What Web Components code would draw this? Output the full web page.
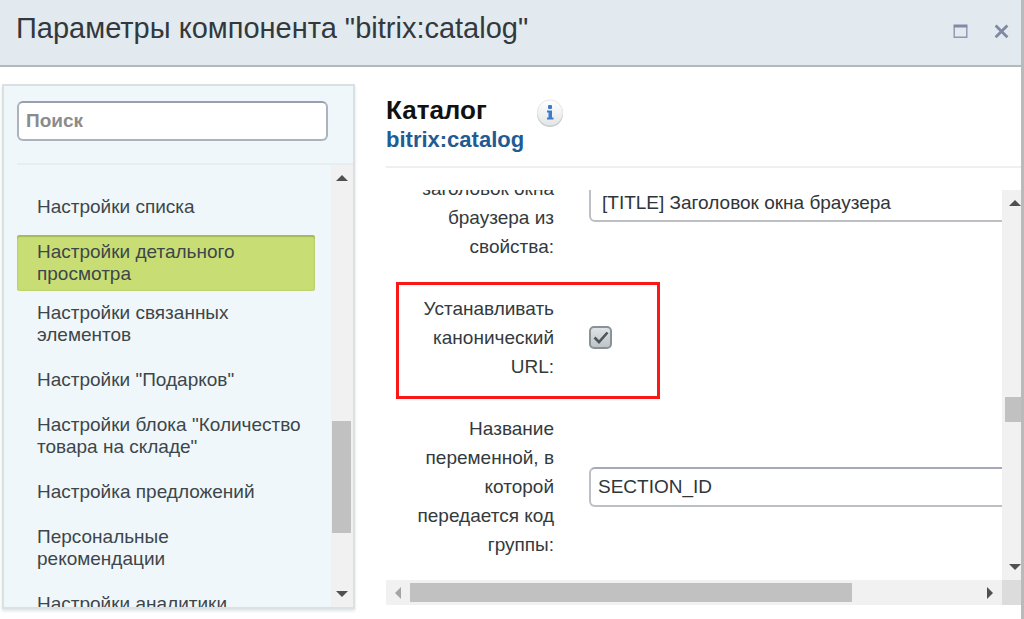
<!DOCTYPE html>
<html lang="ru">
<head>
<meta charset="utf-8">
<title>Параметры компонента</title>
<style>
html, body { margin: 0; height: 100%; }
body { font-family: "Liberation Sans", Arial, sans-serif; font-size: 19px; color: #333a3e; background: #fff; overflow: hidden; }
</style>
</head>
<body>
<component-dialog>
  <dialog-header slot="header">Параметры компонента "bitrix:catalog"</dialog-header>
  <settings-nav slot="nav">
    <nav-item>Настройки списка</nav-item>
    <nav-item active>Настройки детального просмотра</nav-item>
    <nav-item>Настройки связанных элементов</nav-item>
    <nav-item>Настройки "Подарков"</nav-item>
    <nav-item>Настройки блока "Количество товара на складе"</nav-item>
    <nav-item>Настройка предложений</nav-item>
    <nav-item>Персональные<br>рекомендации</nav-item>
    <nav-item>Настройки аналитики</nav-item>
  </settings-nav>
  <settings-panel heading="Каталог" component="bitrix:catalog">
    <setting-row type="select" label="заголовок окна браузера из свойства:" value="[TITLE] Заголовок окна браузера"></setting-row>
    <setting-row type="checkbox" label="Устанавливать канонический URL:" highlighted></setting-row>
    <setting-row type="text" label="Название переменной, в которой передается код группы:" value="SECTION_ID"></setting-row>
  </settings-panel>
</component-dialog>

<script>
class BaseElement extends HTMLElement {
  connectedCallback() {
    if (this.shadowRoot) return;
    this.attachShadow({ mode: "open" }).innerHTML = this.render();
  }
  attr(name) { return (this.getAttribute(name) || "").replace(/"/g, "&quot;"); }
}

customElements.define("component-dialog", class extends BaseElement {
  render() {
    return `<style>
      :host { display: flex; flex-direction: column; height: 100vh; box-sizing: border-box; border-right: 3px solid #b9babc; background: #fff; }
      main { flex: 1; min-height: 0; display: flex; gap: 31px; padding: 17px 0 10px 2px; }
    </style>
    <slot name="header"></slot>
    <main><slot name="nav"></slot><slot></slot></main>`;
  }
});

customElements.define("dialog-header", class extends BaseElement {
  render() {
    return `<style>
      :host { display: flex; align-items: center; justify-content: space-between; flex: none; height: 65px; padding: 0 11px 0 16px;
        background: #e2eaef; border-bottom: 2px solid #b2babb; }
      h1 { margin: 0 0 9px; font-size: 29px; font-weight: 400; line-height: 36px; color: #33383c; white-space: nowrap; }
      div { display: flex; gap: 24px; padding-bottom: 3px; }
      button { display: flex; padding: 0; border: 0; background: none; }
    </style>
    <h1><slot></slot></h1>
    <div>
      <button type="button" aria-label="Развернуть"><svg width="17" height="16" viewBox="0 0 17 16"><path d="M1.5 3H15.5" stroke="#8189a4" stroke-width="3"/><path d="M2.2 4V14.2H14.8V4" fill="none" stroke="#8e96b0" stroke-width="1.4"/></svg></button>
      <button type="button" aria-label="Закрыть"><svg width="17" height="16" viewBox="0 0 17 16"><path d="M2.6 2.4L14.4 14.2M14.4 2.4L2.6 14.2" stroke="#8088a2" stroke-width="2.8"/></svg></button>
    </div>`;
  }
});

customElements.define("scroll-bar", class extends BaseElement {
  render() {
    const h = this.hasAttribute("horizontal");
    const [before, thumb, after] = this.attr("parts").split(" ");
    const icon = (d, muted) => `<svg width="12" height="12" viewBox="0 0 12 12"><path d="${d}" fill="${muted ? "#a5a5a5" : "#505050"}"/></svg>`;
    return `<style>
      :host { display: flex; flex: none; flex-direction: ${h ? "row" : "column"}; ${h ? "height: 25px" : "width: 22px"}; background: #f1f1f1; }
      button { flex: none; display: flex; align-items: center; justify-content: center; padding: 0; border: 0; background: none;
        ${h ? "width: 24px" : "height: 26px; width: 100%"}; }
      svg { flex: none; }
      .thumb { flex: ${thumb} 1 0; background: #c1c1c1; ${h ? "margin: 3px 0" : "margin: 0 2px 0 1px"}; }
    </style>
    <button type="button" aria-label="Назад">${h ? icon("M9 0V12L3 6Z", true) : icon("M0 9H12L6 3Z")}</button>
    <span style="flex:${before} 1 0"></span><span class="thumb"></span><span style="flex:${after} 1 0"></span>
    <button type="button" aria-label="Вперёд">${h ? icon("M3 0V12L9 6Z") : icon("M0 3H12L6 9Z")}</button>`;
  }
});

customElements.define("settings-nav", class extends BaseElement {
  render() {
    return `<style>
      :host { display: flex; flex-direction: column; flex: none; width: 353px; box-sizing: border-box; border: 2px solid #dae1e3;
        background: #f0f7fa; box-shadow: 0 2px 3px #dfe3e5; }
      input { display: block; box-sizing: border-box; margin: 15px 25px 22px 13px; height: 40px; padding: 0 7px; font: bold 19px "Liberation Sans", Arial, sans-serif;
        border: 2px solid #adb2bf; border-top-color: #999fae; border-radius: 6px; background: #fff; }
      input::placeholder { color: #8b8b8b; opacity: 1; }
      .body { flex: 1; min-height: 0; display: flex; margin-left: 13px; border-top: 2px solid #e8edef; }
      nav { flex: 1; min-width: 0; overflow: hidden; display: flex; flex-direction: column; gap: 11px; padding: 25px 16px 0 0; }
    </style>
    <input type="search" aria-label="Поиск" placeholder="Поиск">
    <div class="body"><nav><slot></slot></nav><scroll-bar parts="230 112 48"></scroll-bar></div>`;
  }
});

customElements.define("nav-item", class extends BaseElement {
  render() {
    return `<style>
      :host { display: block; flex: none; border-radius: 3px; }
      :host([active]) { background: #c8de74; box-shadow: inset 0 2px 1px #a5b95f, inset 0 0 2px #a5b95f; margin-bottom: -6px; }
      a { display: block; padding: 6px 0 6px 20px; line-height: 22px; color: #3d464b; text-decoration: none; }
      :host([active]) a { padding-right: 50px; }
    </style><a href="#"><slot></slot></a>`;
  }
});

customElements.define("settings-panel", class extends BaseElement {
  render() {
    return `<style>
      :host { flex: 1; min-width: 0; display: flex; flex-direction: column; padding-bottom: 4px; }
      header { display: flex; gap: 48px; padding: 12px 0 11px; border-bottom: 2px solid #efefef; }
      h2 { margin: 0; font-size: 26px; line-height: 29px; color: #111; }
      header a { font-size: 22px; line-height: 30px; font-weight: 700; color: #1f5c94; text-decoration: none; }
      .title { width: 102px; white-space: nowrap; }
      .info { display: flex; flex: none; padding: 0; margin-top: 3px; width: 28px; height: 28px; border: 0; background: none; }
      .area { flex: 1; min-height: 0; display: grid; grid-template: minmax(0, 1fr) 25px / minmax(0, 1fr) 19px; margin-top: 22px; }
      .view { overflow: hidden; display: flex; flex-direction: column; justify-content: flex-end; gap: 33px; padding-bottom: 21px; }
      .track { display: flex; overflow: hidden; padding-left: 2px; background: #f1f1f1; }
      .corner { background: #dcdcdc; }
    </style>
    <header>
      <div class="title"><h2>${this.attr("heading")}</h2><a href="#">${this.attr("component")}</a></div>
      <button class="info" type="button" aria-label="Информация"><svg width="28" height="28" viewBox="0 0 28 28">
        <defs><linearGradient id="g" x2="0" y2="1"><stop stop-color="#fff"/><stop offset="1" stop-color="#e3e6e7"/></linearGradient></defs>
        <circle cx="14" cy="15" r="13" fill="#c9cdcf"/><circle cx="14" cy="13.5" r="12.6" fill="url(#g)" stroke="#e4e7e8"/>
        <rect x="12" y="6" width="4" height="4" rx="1" fill="#3c7bcb"/><path d="M11 11.5H16V18.5H17.5V20.5H11V18.5H12.5V13.5H11Z" fill="#3c7bcb"/></svg></button>
    </header>
    <div class="area">
      <div class="view"><slot></slot></div>
      <div class="track"><scroll-bar parts="180 25 132"></scroll-bar></div>
      <scroll-bar horizontal parts="0 442 126"></scroll-bar>
      <span class="corner"></span>
    </div>`;
  }
});

customElements.define("setting-row", class extends BaseElement {
  render() {
    const type = this.getAttribute("type");
    const control = {
      select: `<select id="f"><option>${this.attr("value")}</option></select>`,
      checkbox: `<input id="f" type="checkbox" checked>`,
      text: `<input id="f" type="text" value="${this.attr("value")}">`
    }[type];
    return `<style>
      :host { position: relative; display: flex; flex: none; align-items: center; gap: 35px; }
      :host([type=select]) { align-items: flex-start; }
      :host([highlighted])::after { content: ""; position: absolute; inset: -12px auto -18px 10px; width: 258px; border: 3px solid #f91717; pointer-events: none; }
      label { flex: none; box-sizing: border-box; width: 168px; padding-left: 24px; line-height: 29px; text-align: right; }
      select, input[type=text] { flex: none; box-sizing: border-box; width: 90%; height: 40px; margin: 0; padding: 0 7px; appearance: none;
        font: 19px "Liberation Sans", Arial, sans-serif; color: #30353a; background: #fff; border: 2px solid #bcbfc4; border-radius: 6px; }
      input[type=text] { border-top-color: #a5a9ba; }
      select { margin-top: 8px; padding-left: 11px; }
      input[type=checkbox] { appearance: none; flex: none; width: 23px; height: 23px; margin: 0; border: 2px solid #8b9296; border-radius: 5px;
        background: url('data:image/svg+xml,<svg xmlns="http://www.w3.org/2000/svg" viewBox="0 0 19 19"><path d="M3.5 9.5L8 14L16.5 4.5" fill="none" stroke="%23505558" stroke-width="2.6"/></svg>'), linear-gradient(#dde3e6, #bdc5c9); }
    </style><label for="f">${this.attr("label")}</label>${control}`;
  }
});
</script>
</body>
</html>
